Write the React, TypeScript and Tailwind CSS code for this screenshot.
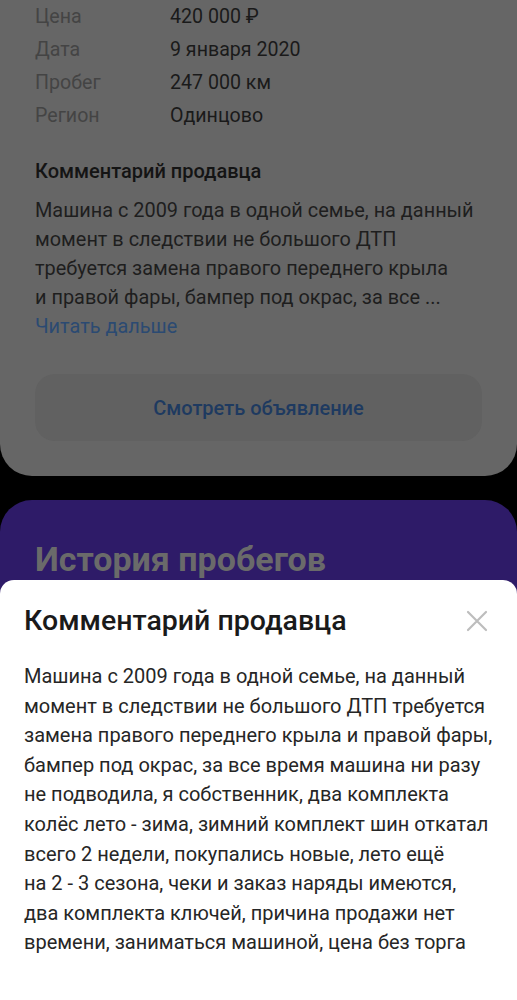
import { FC } from "react";

const rows = [
    { label: "Цена", value: "420 000 ₽" },
    { label: "Дата", value: "9 января 2020" },
    { label: "Пробег", value: "247 000 км" },
    { label: "Регион", value: "Одинцово" },
];

// lines as they wrap in the sheet
const commentLines = [
    "Машина с 2009 года в одной семье, на данный",
    "момент в следствии не большого ДТП требуется",
    "замена правого переднего крыла и правой фары,",
    "бампер под окрас, за все время машина ни разу",
    "не подводила, я собственник, два комплекта",
    "колёс лето - зима, зимний комплект шин откатал",
    "всего 2 недели, покупались новые, лето ещё",
    "на 2 - 3 сезона, чеки и заказ наряды имеются,",
    "два комплекта ключей, причина продажи нет",
    "времени, заниматься машиной, цена без торга",
];

const previewLines = [
    "Машина с 2009 года в одной семье, на данный",
    "момент в следствии не большого ДТП",
    "требуется замена правого переднего крыла",
    "и правой фары, бампер под окрас, за все ...",
];

const CloseIcon: FC = () => (
    <svg width="22" height="22" viewBox="0 0 22 22" fill="none">
        <path d="M2 2L20 20M20 2L2 20" stroke="#bdbdbd" strokeWidth="2.2" strokeLinecap="round" />
    </svg>
);

const AdCard: FC = () => {
    return <div className="bg-[#666666] rounded-b-[32px] px-[35px] pb-[35px]">
        <div className="flex flex-col">
            {rows.map((row) => {
                return <div key={row.label} className="flex items-center h-[33px] text-[19.6px]">
                    <span className="w-[135px] text-[#444444]">{row.label}</span>
                    <span className="text-[#1a1a1a]">{row.value}</span>
                </div>
            })}
        </div>
        <p className="mt-[26px] text-[20px] leading-[26px] font-medium text-[#141414]">Комментарий продавца</p>
        <div className="mt-[12px] text-[19.9px] leading-[29px] text-[#1e1e1e] whitespace-nowrap">
            {previewLines.map((line) => <p key={line}>{line}</p>)}
            <p className="text-[#2b4a72]">Читать дальше</p>
        </div>
        <div className="mt-[33px] h-[67px] rounded-[20px] bg-[#616161] flex items-center justify-center">
            <span className="text-[20px] font-medium text-[#1e3a60]">Смотреть объявление</span>
        </div>
    </div>
};

const SellerSheet: FC = () => {
    return <div className="absolute left-0 right-0 top-[580px] bottom-0 bg-white rounded-t-[14px] px-[24px] pt-[23px]">
        <div className="flex items-center justify-between h-[36px]">
            <h2 className="text-[28.5px] font-medium text-[#1a1a1a]">Комментарий продавца</h2>
            <div className="mr-[5px]">
                <CloseIcon />
            </div>
        </div>
        <div className="mt-[23px] text-[20px] leading-[29.6px] text-[#262626] whitespace-nowrap">
            {commentLines.map((line) => <p key={line}>{line}</p>)}
        </div>
    </div>
};

export default function App() {
    return <div className="relative h-[1000px] w-full overflow-hidden bg-black" style={{ fontFamily: "Roboto, 'Liberation Sans', sans-serif" }}>
        <AdCard />
        <div className="mt-[24px] bg-[#2e1b68] rounded-t-[32px] px-[35px] pt-[39px] h-[200px]">
            <h1 className="text-[34px] leading-[40px] font-bold text-[#6a6a6a]">История пробегов</h1>
        </div>
        <SellerSheet />
    </div>
}
